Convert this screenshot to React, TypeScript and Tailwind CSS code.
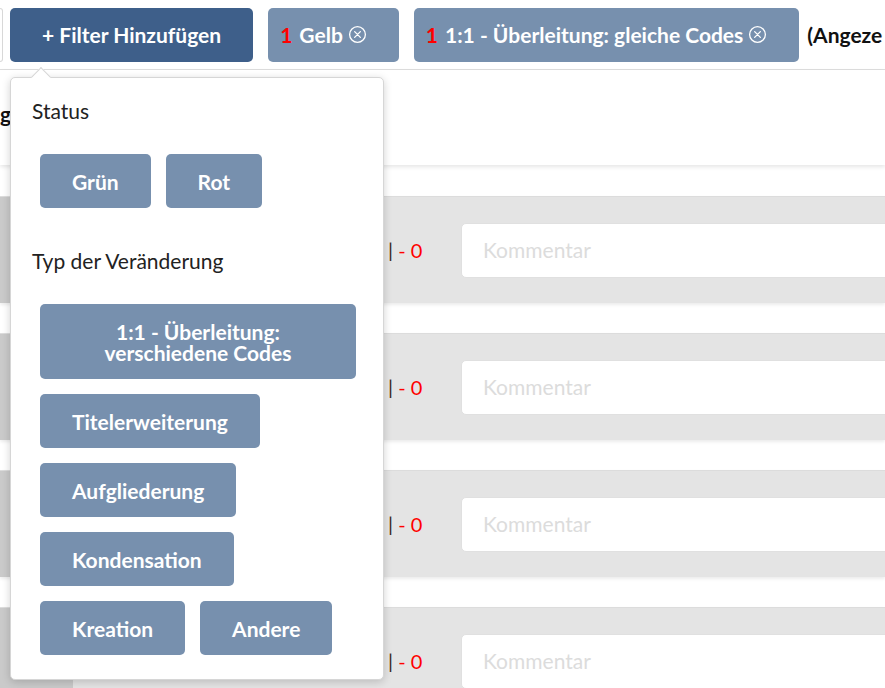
const font = { fontFamily: "Lato, 'Open Sans', sans-serif" };

function CloseIcon() {
  return (
    <svg width="19" height="19" viewBox="0 0 20 20" fill="none" className="shrink-0">
      <circle cx="10" cy="10" r="8.3" stroke="white" strokeWidth="1.4" />
      <path d="M7 7L13 13M13 7L7 13" stroke="white" strokeWidth="1.4" strokeLinecap="round" />
    </svg>
  );
}

function Chip({ label }: { label: string }) {
  return (
    <div className="h-[54px] shrink-0 rounded-[5px] bg-[#7790ae] pl-3 pr-[32px] flex items-center text-[21px] font-bold text-white whitespace-nowrap">
      <span className="text-[#ff0000] mr-[7px]">1</span>
      <span>{label}</span>
      <span className="ml-[5px]">
        <CloseIcon />
      </span>
    </div>
  );
}

function OptionButton({ label, wide }: { label: string; wide?: boolean }) {
  return (
    <button
      className={
        "rounded-[5px] bg-[#7790ae] px-8 py-[16.5px] text-[21px] leading-[21px] font-bold text-white text-center " +
        (wide ? "w-[316px]" : "")
      }
    >
      {label}
    </button>
  );
}

function Row() {
  return (
    <div className="h-[107px] bg-[#e4e4e4] flex shadow-[0_2px_3px_rgba(0,0,0,0.08)] border-t border-[#dcdcdc]">
      <div className="w-[73px] bg-[#cacaca] shrink-0" />
      <div className="flex-1 flex items-center">
        <div className="ml-[315px] w-[73px] text-[20px] whitespace-nowrap">
          <span className="text-[#3a2a20]">|</span>
          <span className="text-[#ff0000]"> - 0</span>
        </div>
        <div className="h-[55px] w-[460px] shrink-0 bg-white border border-[#e0e0e0] rounded-[5px] flex items-center pl-[21px] text-[21px] text-[#dcdcdc]">
          Kommentar
        </div>
      </div>
    </div>
  );
}

export default function App() {
  return (
    <div className="relative w-[885px] h-[688px] overflow-hidden bg-white text-[#222]" style={font}>
      {/* Filterleiste */}
      <div className="h-[70px] border-b border-[#dedede] flex items-center whitespace-nowrap overflow-hidden">
        <div className="w-[3px] h-[54px] border border-l-0 border-[#d8d8d8] rounded-r-[4px] shrink-0" />
        <button className="ml-[7px] h-[54px] shrink-0 rounded-[5px] bg-[#3e5f8a] px-8 text-[21px] font-bold text-white">
          + Filter Hinzufügen
        </button>
        <div className="ml-[15px]">
          <Chip label="Gelb" />
        </div>
        <div className="ml-[15px]">
          <Chip label="1:1 - Überleitung: gleiche Codes" />
        </div>
        <span className="ml-2 text-[21px] font-bold text-[#111]">(Angeze</span>
      </div>

      {/* Kopfbereich */}
      <div className="h-[95px] shadow-[0_2px_4px_rgba(0,0,0,0.1)] flex items-start">
        <span className="mt-[28px] text-[21px] font-bold text-[#111]">g</span>
      </div>

      {/* Zeilen */}
      <div className="mt-[31px] flex flex-col gap-[30px]">
        <Row />
        <Row />
        <Row />
        <Row />
      </div>

      {/* Filter-Popover */}
      <div className="absolute left-[10px] top-[77px] w-[374px] bg-white border border-[#d6d6d6] rounded-[5px] shadow-[0_2px_8px_rgba(0,0,0,0.18)] pt-[21px] pb-[24px]">
        <div className="absolute left-[23px] -top-[8px] w-[14px] h-[14px] rotate-45 bg-white border-l border-t border-[#d6d6d6]" />
        <div className="pl-[21px] text-[21px] leading-[24px]">Status</div>
        <div className="mt-[31px] pl-[29px] flex gap-[15px]">
          <OptionButton label="Grün" />
          <OptionButton label="Rot" />
        </div>
        <div className="mt-[41px] pl-[21px] text-[21px] leading-[24px]">Typ der Veränderung</div>
        <div className="mt-[31px] pl-[29px] flex flex-col items-start gap-[15px]">
          <OptionButton label="1:1 - Überleitung: verschiedene Codes" wide />
          <OptionButton label="Titelerweiterung" />
          <OptionButton label="Aufgliederung" />
          <OptionButton label="Kondensation" />
          <div className="flex gap-[15px]">
            <OptionButton label="Kreation" />
            <OptionButton label="Andere" />
          </div>
        </div>
      </div>
    </div>
  );
}
